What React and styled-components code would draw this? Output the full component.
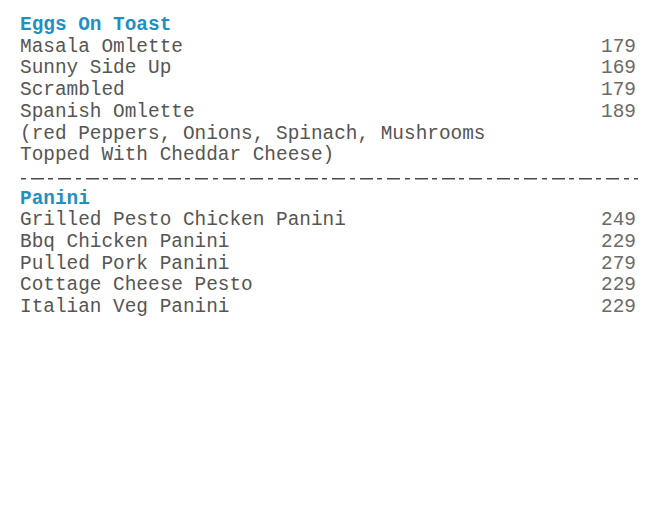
import styled, { createGlobalStyle } from "styled-components";

const GlobalStyle = createGlobalStyle`
    body {
        margin: 0;
        background: #fff;
    }
`;

const sections = [
    {
        title: "Eggs On Toast",
        items: [
            { name: "Masala Omlette", price: 179 },
            { name: "Sunny Side Up", price: 169 },
            { name: "Scrambled", price: 179 },
            { name: "Spanish Omlette", price: 189 },
            { name: "(red Peppers, Onions, Spinach, Mushrooms" },
            { name: "Topped With Cheddar Cheese)" },
        ],
    },
    {
        title: "Panini",
        items: [
            { name: "Grilled Pesto Chicken Panini", price: 249 },
            { name: "Bbq Chicken Panini", price: 229 },
            { name: "Pulled Pork Panini", price: 279 },
            { name: "Cottage Cheese Pesto", price: 229 },
            { name: "Italian Veg Panini", price: 229 },
        ],
    },
];

function App() {
    return (
        <Menu>
            <GlobalStyle />
            {sections.map((section, idx) => (
                <Section key={section.title}>
                    {idx > 0 && <Divider />}
                    <Title>{section.title}</Title>
                    {section.items.map((item) => (
                        <Row key={item.name}>
                            <Name>{item.name}</Name>
                            {item.price && <Price>{item.price}</Price>}
                        </Row>
                    ))}
                </Section>
            ))}
        </Menu>
    );
}

export default App;

const Menu = styled.div`
    padding: 15px 14px 0 20px;
    font-family: "Liberation Mono", "Courier New", monospace;
    font-size: 19.4px;
    line-height: 21.7px;
    color: #555;
`;

const Section = styled.div`
    display: flex;
    flex-direction: column;
`;

const Title = styled.div`
    font-weight: bold;
    color: #1f8fc4;
`;

const Row = styled.div`
    display: flex;
    justify-content: space-between;
    white-space: pre;
`;

const Name = styled.span``;

const Price = styled.span`
    color: #6a6a6a;
`;

// row of alternating short / long dashes, like the printed menu
const Divider = styled.div`
    height: 21.7px;
    margin-right: -2px;
    background-image: repeating-linear-gradient(
        to right,
        #4a4a4a 0 5px,
        transparent 5px 10px,
        #4a4a4a 10px 23px,
        transparent 23px 27.4px
    );
    background-size: 100% 1.5px;
    background-position: 1px 11px;
    background-repeat: no-repeat;
`;
